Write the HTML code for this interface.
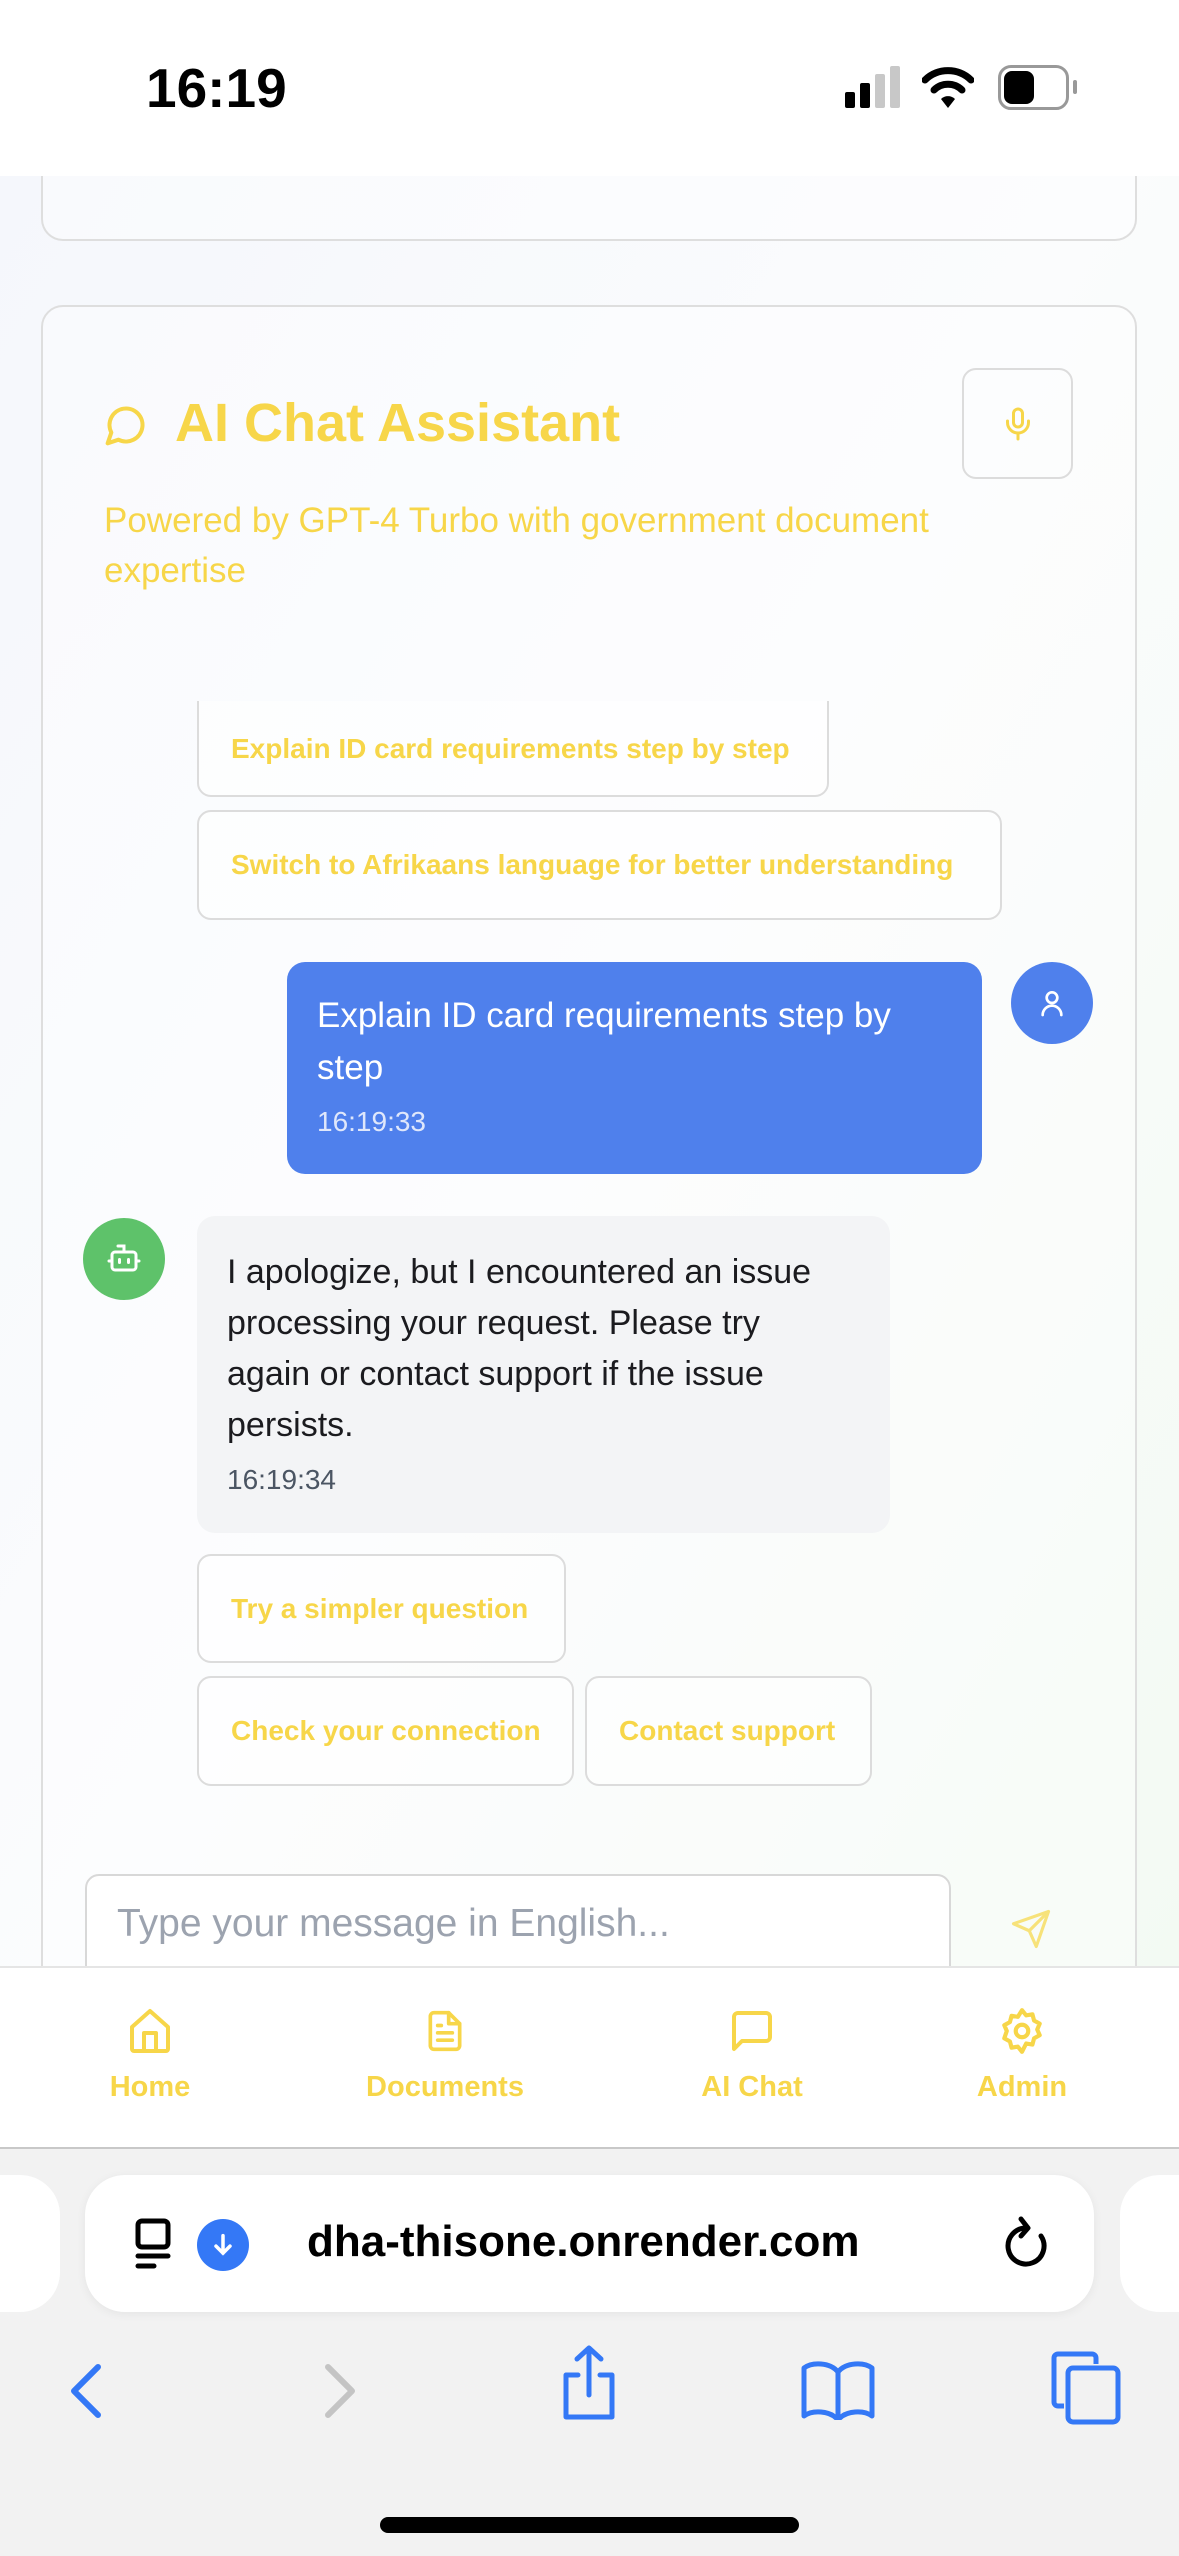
<!DOCTYPE html>
<html><head><meta charset="utf-8"><style>
*{box-sizing:border-box;margin:0;padding:0}
body{width:1179px;height:2556px;position:relative;overflow:hidden;background:#fff;font-family:"Liberation Sans",sans-serif}
.a{position:absolute}
.y{color:#f7d649}
.btn{position:absolute;border:2px solid #dcdcdc;border-radius:14px;color:#f7d649;font-size:28px;font-weight:bold;display:flex;align-items:center;padding-left:32px;background:rgba(255,255,255,.5)}
.nav{position:absolute;top:2005px;width:240px;text-align:center;color:#f7d649;font-size:29px;font-weight:bold}
.nav svg{display:block;margin:0 auto 14px}
</style></head><body>
<div class="a" style="left:0;top:176px;width:1179px;height:1790px;background:linear-gradient(120deg,#f5f7fc 0%,#fbfcfd 50%,#f3faf3 100%)"></div>
<div class="a" style="left:41px;top:150px;width:1096px;height:91px;border:2px solid #dedede;border-top:none;border-radius:0 0 22px 22px;background:rgba(255,255,255,.4)"></div>
<div class="a" style="left:41px;top:305px;width:1096px;height:1700px;border:2px solid #dedede;border-radius:22px;background:rgba(255,255,255,.35)"></div>
<!-- status bar -->
<div class="a" style="left:0;top:0;width:1179px;height:176px;background:#fff"></div>
<div class="a" style="left:146px;top:56px;font-size:55px;font-weight:bold;color:#000">16:19</div>
<div class="a" style="left:845px;top:92px;width:10px;height:16px;background:#000;border-radius:2px"></div>
<div class="a" style="left:860px;top:83px;width:10px;height:25px;background:#000;border-radius:2px"></div>
<div class="a" style="left:875px;top:74px;width:10px;height:34px;background:#c8c8c8;border-radius:2px"></div>
<div class="a" style="left:890px;top:66px;width:10px;height:42px;background:#c8c8c8;border-radius:2px"></div>
<svg class="a" style="left:922px;top:64px" width="52" height="46" viewBox="0 0 52 46"><path d="M3 16 A33 33 0 0 1 49 16" stroke="#000" stroke-width="7" fill="none" stroke-linecap="round"/><path d="M12 26 A20 20 0 0 1 40 26" stroke="#000" stroke-width="7" fill="none" stroke-linecap="round"/><path d="M19 35 L26 44 L33 35 A10 10 0 0 0 19 35Z" fill="#000"/></svg>
<div class="a" style="left:998px;top:65px;width:71px;height:45px;border:3px solid #999;border-radius:13px"></div>
<div class="a" style="left:1004px;top:71px;width:30px;height:33px;background:#000;border-radius:8px"></div>
<div class="a" style="left:1073px;top:80px;width:4px;height:14px;background:#999;border-radius:2px"></div>
<!-- header -->
<svg class="a" style="left:104px;top:402px" width="44" height="46" viewBox="0 0 24 24" fill="none" stroke="#f7d649" stroke-width="2.2" stroke-linecap="round" stroke-linejoin="round"><path d="M7.9 20A9 9 0 1 0 4 16.1L2 22Z"/></svg>
<div class="a y" style="left:175px;top:392px;font-size:54px;font-weight:bold;letter-spacing:0">AI Chat Assistant</div>
<div class="a" style="left:962px;top:368px;width:111px;height:111px;border:2px solid #dcdcdc;border-radius:14px"></div>
<svg class="a" style="left:1000px;top:404px" width="36" height="40" viewBox="0 0 24 24" fill="none" stroke="#f7d649" stroke-width="2" stroke-linecap="round"><rect x="9" y="2" width="6" height="12" rx="3"/><path d="M19 10v1a7 7 0 0 1-14 0v-1M12 18v4"/></svg>
<div class="a y" style="left:104px;top:496px;font-size:35px;line-height:50px;width:900px">Powered by GPT-4 Turbo with government document expertise</div>
<!-- messages area -->
<div class="a" style="left:43px;top:701px;width:1092px;height:1170px;overflow:hidden">
  <div class="btn" style="left:154px;top:-40px;width:632px;height:136px;padding-top:40px">Explain ID card requirements step by step</div>
  <div class="btn" style="left:154px;top:109px;width:805px;height:110px">Switch to Afrikaans language for better understanding</div>
</div>
<div class="a" style="left:287px;top:962px;width:695px;height:212px;background:#4f80ec;border-radius:18px;color:#fff;padding:28px 50px 25px 30px;font-size:35px;line-height:52px">Explain ID card requirements step by step<div style="font-size:28px;color:#dfe7fb;margin-top:8px;line-height:40px">16:19:33</div></div>
<div class="a" style="left:1011px;top:962px;width:82px;height:82px;border-radius:50%;background:#4f80ec"></div>
<svg class="a" style="left:1036px;top:985px" width="32" height="36" viewBox="0 0 24 24" fill="none" stroke="#fff" stroke-width="2" stroke-linecap="round"><circle cx="12" cy="8" r="4"/><path d="M5 21a7 7 0 0 1 14 0"/></svg>
<div class="a" style="left:83px;top:1218px;width:82px;height:82px;border-radius:50%;background:#5ec26a"></div>
<svg class="a" style="left:106px;top:1240px" width="36" height="36" viewBox="0 0 24 24" fill="none" stroke="#fff" stroke-width="2" stroke-linecap="round"><path d="M12 8V4H8"/><rect x="4" y="8" width="16" height="12" rx="2"/><path d="M2 14h2M20 14h2M9 13v2M15 13v2"/></svg>
<div class="a" style="left:197px;top:1216px;width:693px;height:317px;background:#f3f4f6;border-radius:18px;color:#1b1b1f;padding:31px 40px 28px 30px;font-size:34px;line-height:51px">I apologize, but I encountered an issue processing your request. Please try again or contact support if the issue persists.<div style="font-size:28px;color:#4b5563;margin-top:9px;line-height:40px">16:19:34</div></div>
<div class="btn" style="left:197px;top:1554px;width:369px;height:109px">Try a simpler question</div>
<div class="btn" style="left:197px;top:1676px;width:377px;height:110px">Check your connection</div>
<div class="btn" style="left:585px;top:1676px;width:287px;height:110px">Contact support</div>
<!-- input -->
<div class="a" style="left:85px;top:1874px;width:866px;height:120px;border:2px solid #d8d8d8;border-radius:14px;background:#fff;color:#9ca3af;font-size:39px;padding:26px 30px">Type your message in English...</div>
<svg class="a" style="left:1010px;top:1908px" width="42" height="42" viewBox="0 0 24 24" fill="none" stroke="#f7e27a" stroke-width="1.8" stroke-linejoin="round"><path d="M22 2L2 9l9 4 4 9z"/><path d="M22 2L11 13"/></svg>
<!-- bottom nav -->
<div class="a" style="left:0;top:1966px;width:1179px;height:183px;background:#fff;border-top:2px solid #e5e5e5;border-bottom:2px solid #c8c8c8"></div>
<div class="nav" style="left:30px"><svg width="48" height="52" viewBox="0 0 24 24" fill="none" stroke="#f7d649" stroke-width="2" stroke-linejoin="round"><path d="M3 10L12 2l9 8v11a1 1 0 0 1-1 1H4a1 1 0 0 1-1-1z"/><path d="M9 22v-9h6v9"/></svg>Home</div>
<div class="nav" style="left:325px"><svg width="44" height="52" viewBox="0 0 24 24" fill="none" stroke="#f7d649" stroke-width="2" stroke-linejoin="round" stroke-linecap="round"><path d="M14 2H6a2 2 0 0 0-2 2v16a2 2 0 0 0 2 2h12a2 2 0 0 0 2-2V8z"/><path d="M14 2v6h6M8 13h8M8 17h8M8 9h2"/></svg>Documents</div>
<div class="nav" style="left:632px"><svg width="48" height="52" viewBox="0 0 24 24" fill="none" stroke="#f7d649" stroke-width="2" stroke-linejoin="round"><path d="M21 15a2 2 0 0 1-2 2H7l-4 4V5a2 2 0 0 1 2-2h14a2 2 0 0 1 2 2z"/></svg>AI Chat</div>
<div class="nav" style="left:902px"><svg width="50" height="52" viewBox="0 0 24 24" fill="none" stroke="#f7d649" stroke-width="2" stroke-linejoin="round"><circle cx="12" cy="12" r="3"/><path d="M12 2l2 2.5 3-.5.8 3 2.7 1.5-1.2 2.8 1.2 2.7-2.7 1.5-.8 3-3-.5L12 22l-2-2.5-3 .5-.8-3-2.7-1.5L4.7 12 3.5 9.2 6.2 7.7 7 4.7l3 .5z"/></svg>Admin</div>
<!-- safari -->
<div class="a" style="left:0;top:2149px;width:1179px;height:407px;background:#f2f2f2"></div>
<div class="a" style="left:-40px;top:2175px;width:100px;height:137px;background:#fff;border-radius:40px"></div>
<div class="a" style="left:1120px;top:2175px;width:100px;height:137px;background:#fff;border-radius:40px"></div>
<div class="a" style="left:85px;top:2175px;width:1009px;height:137px;background:#fff;border-radius:40px;box-shadow:0 2px 10px rgba(0,0,0,.06)"></div>
<svg class="a" style="left:135px;top:2218px" width="36" height="54" viewBox="0 0 36 54" fill="none" stroke="#000" stroke-width="5" stroke-linecap="round"><rect x="3" y="3" width="30" height="26" rx="4"/><path d="M3 38h30M3 48h16"/></svg>
<div class="a" style="left:197px;top:2219px;width:52px;height:52px;border-radius:50%;background:#3478f6"></div>
<svg class="a" style="left:209px;top:2231px" width="28" height="28" viewBox="0 0 24 24" fill="none" stroke="#fff" stroke-width="3" stroke-linecap="round"><path d="M12 4v15M6 13l6 6 6-6"/></svg>
<div class="a" style="left:307px;top:2217px;font-size:44px;font-weight:bold;color:#000">dha-thisone.onrender.com</div>
<svg class="a" style="left:1002px;top:2212px" width="48" height="64" viewBox="0 0 48 64" fill="none" stroke="#000" stroke-width="5" stroke-linecap="round" stroke-linejoin="round"><path d="M24 16A18 18 0 1 0 39 24"/><path d="M19 7l7 9-7 8"/></svg>
<svg class="a" style="left:66px;top:2363px" width="40" height="56" viewBox="0 0 40 56" fill="none" stroke="#3478f6" stroke-width="6" stroke-linecap="round" stroke-linejoin="round"><path d="M32 4L8 28l24 24"/></svg>
<svg class="a" style="left:320px;top:2363px" width="40" height="56" viewBox="0 0 40 56" fill="none" stroke="#c4c4c4" stroke-width="6" stroke-linecap="round" stroke-linejoin="round"><path d="M8 4l24 24L8 52"/></svg>
<svg class="a" style="left:558px;top:2345px" width="62" height="76" viewBox="0 0 62 76" fill="none" stroke="#3478f6" stroke-width="5" stroke-linecap="round" stroke-linejoin="round"><path d="M31 4v46M19 14L31 3l12 11M20 30H8v42h46V30H42"/></svg>
<svg class="a" style="left:800px;top:2360px" width="76" height="60" viewBox="0 0 76 60" fill="none" stroke="#3478f6" stroke-width="5" stroke-linejoin="round"><path d="M38 12C30 2 12 2 4 8v48c8-6 26-6 34 4 8-10 26-10 34-4V8C64 2 46 2 38 12zM38 12v46"/></svg>
<svg class="a" style="left:1050px;top:2350px" width="72" height="76" viewBox="0 0 72 76" fill="none" stroke="#3478f6" stroke-width="5" stroke-linejoin="round"><path d="M14 56H8a4 4 0 0 1-4-4V8a4 4 0 0 1 4-4h34a4 4 0 0 1 4 4v6"/><rect x="18" y="18" width="50" height="54" rx="5"/></svg>
<div class="a" style="left:380px;top:2517px;width:419px;height:16px;background:#000;border-radius:8px"></div>
</body></html>
